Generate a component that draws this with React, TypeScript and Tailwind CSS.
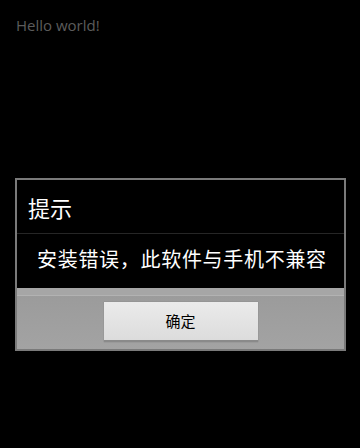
export default function App() {
  return (
    <div className="w-[360px] h-[448px] bg-black relative overflow-hidden" style={{ fontFamily: '"Open Sans", "Noto Sans CJK SC", sans-serif' }}>
      <div className="pl-4 pt-[15px] text-[15px] leading-[20px] text-[#5c5c5c]">Hello world!</div>
      <div className="absolute left-[15px] top-[178px] w-[331px] h-[173px] border-2 border-[#7a7a7a] bg-black flex flex-col">
        <div className="h-[54px] flex items-center pl-[11px] border-b border-[#262626]">
          <span className="text-[22px] leading-none text-white" style={{ fontFamily: '"Noto Sans CJK SC", sans-serif' }}>提示</span>
        </div>
        <div className="h-[54px] flex items-center pl-[20px] pb-[5px]">
          <span className="text-[20px] leading-none text-white tracking-[0.7px]" style={{ fontFamily: '"Noto Sans CJK SC", sans-serif' }}>安装错误，此软件与手机不兼容</span>
        </div>
        <div className="flex-1 flex flex-col bg-gradient-to-b from-[#9a9a9a] to-[#a3a3a3]">
          <div className="h-[8px] bg-[#a6a6a6] border-b border-[#b2b2b2]"></div>
          <div className="flex-1 flex justify-center pt-[6px]">
            <div className="w-[154px] h-[40px] bg-gradient-to-b from-[#ebebeb] to-[#dcdcdc] border-b-2 border-[#8a8a8a] flex items-center justify-center shadow-[0_0_1px_#777]">
              <span className="text-[15px] text-black" style={{ fontFamily: '"Noto Sans CJK SC", sans-serif' }}>确定</span>
            </div>
          </div>
        </div>
      </div>
    </div>
  );
}
